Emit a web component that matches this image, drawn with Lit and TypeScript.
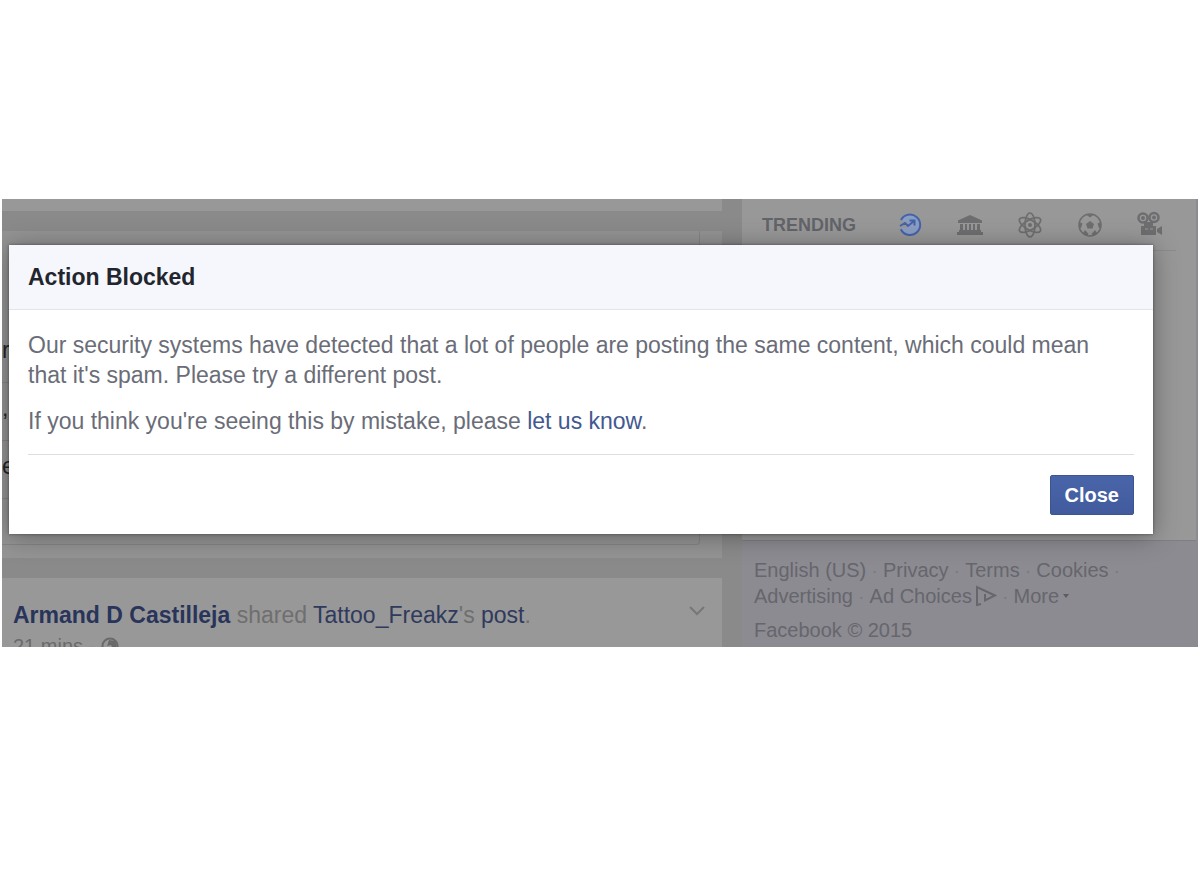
import { LitElement, html, css, svg } from "lit";
import { customElement } from "lit/decorators.js";

@customElement("trending-bar")
class TrendingBar extends LitElement {
  static styles = css`
    :host {
      display: block;
      padding: 0 20px;
    }
    .bar {
      display: flex;
      align-items: center;
      height: 51px;
      border-bottom: 1px solid #8c8c8c;
    }
    h2 {
      flex: 1;
      margin: 0;
      font-size: 18px;
      font-weight: 700;
      line-height: 24px;
      color: #63646a;
    }
    .tabs {
      display: flex;
      gap: 32px;
      padding-right: 12px;
    }
    button {
      display: block;
      padding: 0;
      border: 0;
      background: none;
      color: #6e6e70;
    }
    .active {
      color: #4464a8;
    }
    svg {
      display: block;
      width: 28px;
      height: 28px;
    }
  `;

  private icon(label: string, shape: unknown, active = false) {
    return html`<button class=${active ? "active" : ""} aria-label=${label}>
      <svg viewBox="0 0 28 28" fill="none" stroke="currentColor" stroke-width="2">${shape}</svg>
    </button>`;
  }

  render() {
    return html`
      <div class="bar">
        <h2>TRENDING</h2>
        <div class="tabs">
          ${this.icon(
            "Top trends",
            svg`<path fill="#8b9dc4" d="M5 9.500A10 10 0 1 1 4.500 17L10 17L13 14L11 11Z" stroke="none"/>
              <path d="M5 9A10.200 10.200 0 1 1 4.800 18.300"/>
              <path d="M4 15l5-3 3 3 6-5M13.500 9.500h5v5"/>`,
            true
          )}
          ${this.icon(
            "Politics",
            svg`<g fill="currentColor" stroke="none">
              <path d="M14 4L26 9.500V12H2V9.500Z"/>
              <path d="M4 13h3v6H4zM9 13h2v6H9zM13 13h2v6h-2zM17 13h2v6h-2zM21 13h3v6h-3z"/>
              <path d="M3 19h22v2H3zM1 21h26v3H1z"/></g>`
          )}
          ${this.icon(
            "Science",
            svg`<g stroke-width="1.700"><ellipse cx="14" cy="14" rx="5" ry="12"/>
              <ellipse cx="14" cy="14" rx="5" ry="12" transform="rotate(60 14 14)"/>
              <ellipse cx="14" cy="14" rx="5" ry="12" transform="rotate(120 14 14)"/></g>
              <circle cx="14" cy="14" r="2" fill="currentColor" stroke="none"/>`
          )}
          ${this.icon(
            "Sports",
            svg`<circle cx="14" cy="14" r="11" stroke-width="1.500"/>
              <g fill="currentColor" stroke="none"><path d="M14 10l4 3-1.500 4.500h-5l-1.500-4.500z"/>
              <path d="M10 3.500h8L14 6.500zM3 11l3.500 1.500L5 17 3 17zM25 11l-3.500 1.500 1.500 4.500 2 0zM7 22l2-3 3.500 4-2 2zM21 22l-2-3-3.500 4 2 2z"/></g>`
          )}
          ${this.icon(
            "Entertainment",
            svg`<circle cx="7" cy="7" r="4.500" stroke-width="2.500"/><circle cx="18" cy="6.500" r="4.500" stroke-width="2.500"/>
              <circle cx="7" cy="7" r="1" /><circle cx="18" cy="6.500" r="1"/>
              <g fill="currentColor" stroke="none"><path d="M5 15h15v9H5zM21 18l5-3v9l-5-3zM8 11h9v4H8z"/></g>
              <path stroke="#989898" stroke-width="1" d="M9 18h3M14 18h3"/>`
          )}
        </div>
      </div>
    `;
  }
}

@customElement("site-links")
class SiteLinks extends LitElement {
  static styles = css`
    :host {
      display: block;
      padding: 16px 12px 0;
      font-size: 20px;
      line-height: 26px;
      color: #66666c;
    }
    a {
      color: inherit;
      text-decoration: none;
    }
    .row {
      display: flex;
      gap: 5px;
      white-space: nowrap;
    }
    .choices {
      display: flex;
      align-items: center;
      gap: 3px;
    }
    .dot {
      color: #7b7b81;
    }
    svg {
      width: 22px;
      height: 22px;
    }
    .more {
      display: flex;
      align-items: center;
      gap: 4px;
    }
    .caret {
      border: 3px solid transparent;
      border-top: 4px solid #5c5c62;
      border-bottom: 0;
    }
    p {
      margin: 8px 0 0;
    }
  `;

  render() {
    const dot = html`<span class="dot">·</span>`;
    return html`
      <nav>
        <div class="row">
          <a href="#">English (US)</a>${dot}<a href="#">Privacy</a>${dot}<a href="#">Terms</a>${dot}<a href="#">Cookies</a>${dot}
        </div>
        <div class="row">
          <a href="#">Advertising</a>${dot}
          <a href="#" class="choices">Ad Choices
            <svg viewBox="0 0 22 22" fill="none" stroke="currentColor" stroke-width="2">
              <path d="M6 19l-4 1V2l18 8.500-10 5V9"/>
            </svg></a>${dot}
          <a href="#" class="more">More<span class="caret"></span></a>
        </div>
      </nav>
      <p>Facebook © 2015</p>
    `;
  }
}

@customElement("news-feed")
class NewsFeed extends LitElement {
  static styles = css`
    :host {
      display: flex;
      flex-direction: column;
      gap: 20px;
      font-size: 23px;
    }
    .card {
      background: #989898;
    }
    .previous {
      height: 12px;
    }
    .current {
      height: 327px;
      box-sizing: border-box;
      padding: 0 22px 13px 0;
      background: #949494;
    }
    .attachment {
      display: flex;
      flex-direction: column;
      box-sizing: border-box;
      height: 314px;
      padding-top: 94px;
      border-right: 1px solid #858585;
      border-bottom: 1px solid #858585;
      border-radius: 0 0 4px 0;
      color: #252525;
    }
    .line {
      height: 58px;
      line-height: 50px;
      box-sizing: border-box;
      border-bottom: 1px solid #858585;
    }
    .story {
      display: flex;
      align-items: flex-start;
      justify-content: space-between;
      height: 69px;
      padding: 0 16px 0 11px;
      overflow: hidden;
    }
    .headline {
      margin: 0;
      padding-top: 22px;
      line-height: 30px;
      color: #6f6f6f;
    }
    .meta {
      display: flex;
      align-items: center;
      gap: 6px;
      font-size: 20px;
      line-height: 32px;
      color: #6a6a6a;
    }
    a {
      color: #2f3a5c;
      text-decoration: none;
    }
    .author {
      font-weight: 700;
      color: #28345a;
    }
    button {
      padding: 24px 0 0;
      border: 0;
      background: none;
      color: #777;
    }
    svg {
      display: block;
      width: 18px;
      height: 18px;
    }
  `;

  render() {
    return html`
      <div class="card previous"></div>
      <div class="current">
        <div class="attachment">
          <div class="line">r</div>
          <div class="line">,</div>
          <div class="line">e</div>
        </div>
      </div>
      <article class="card story">
        <div>
          <p class="headline">
            <a href="#" class="author">Armand D Castilleja</a> shared
            <a href="#">Tattoo_Freakz</a>'s <a href="#">post</a>.
          </p>
          <div class="meta">
            21 mins ·
            <svg viewBox="0 0 18 18" fill="none" stroke="currentColor" stroke-width="2">
              <circle cx="9" cy="9" r="7.500" />
              <path fill="currentColor" d="M8 3l6 1 2 5-4 3-2-4-4 1z" stroke="none" />
            </svg>
          </div>
        </div>
        <button aria-label="Story options">
          <svg viewBox="0 0 18 18" fill="none" stroke="currentColor" stroke-width="2">
            <path d="M2 5l7 7 7-7" />
          </svg>
        </button>
      </article>
    `;
  }
}

@customElement("blocked-dialog")
class BlockedDialog extends LitElement {
  static styles = css`
    :host {
      display: block;
      background: #fff;
      box-shadow: 0 2px 24px rgba(0, 0, 0, 0.35), 0 0 3px rgba(0, 0, 0, 0.4);
      font-size: 23px;
      line-height: 30px;
      color: #6a6d78;
    }
    h1 {
      margin: 0;
      padding: 17px 19px;
      border-bottom: 1px solid #e3e4e8;
      background: #f6f7fc;
      font-size: 23px;
      line-height: 30px;
      color: #23252e;
    }
    .body {
      padding: 20px 19px 2px;
    }
    p {
      margin: 0 0 16px;
      padding-right: 12px;
    }
    a {
      color: #42598f;
      text-decoration: none;
    }
    .actions {
      display: flex;
      justify-content: flex-end;
      margin: 0 19px;
      padding: 20px 0 19px;
      border-top: 1px solid #dedede;
    }
    button {
      height: 40px;
      padding: 0 14px;
      border: 1px solid #3c5592;
      border-radius: 2px;
      background: linear-gradient(#4965a9, #415b9d);
      font: 700 20px "Liberation Sans", Arial, sans-serif;
      color: #fff;
    }
  `;

  render() {
    return html`
      <div role="dialog" aria-labelledby="title">
        <h1 id="title">Action Blocked</h1>
        <div class="body">
          <p>
            Our security systems have detected that a lot of people are posting the same content, which could mean
            that it's spam. Please try a different post.
          </p>
          <p>If you think you're seeing this by mistake, please <a href="#">let us know</a>.</p>
        </div>
        <div class="actions"><button>Close</button></div>
      </div>
    `;
  }
}

@customElement("app-root")
class AppRoot extends LitElement {
  static styles = css`
    :host {
      display: block;
      padding: 199px 2px 0;
      background: #fff;
      font-family: "Liberation Sans", Arial, sans-serif;
    }
    .scene {
      position: relative;
      overflow: hidden;
      background: #8a8a8b;
    }
    .page {
      display: grid;
      grid-template-columns: minmax(0, 30fr) minmax(0, 19fr);
      gap: 20px;
    }
    .side {
      display: flex;
      flex-direction: column;
      background: #8c8b92;
    }
    .trends {
      height: 342px;
      box-sizing: border-box;
      margin-right: 2px;
      border-bottom: 1px solid #7f7f82;
      background: #989898;
    }
    .modal {
      position: absolute;
      top: 46px;
      left: 7px;
      right: 45px;
    }
  `;

  render() {
    return html`
      <div class="scene">
        <div class="page">
          <news-feed></news-feed>
          <aside class="side">
            <div class="trends"><trending-bar></trending-bar></div>
            <site-links></site-links>
          </aside>
        </div>
        <blocked-dialog class="modal"></blocked-dialog>
      </div>
    `;
  }
}
